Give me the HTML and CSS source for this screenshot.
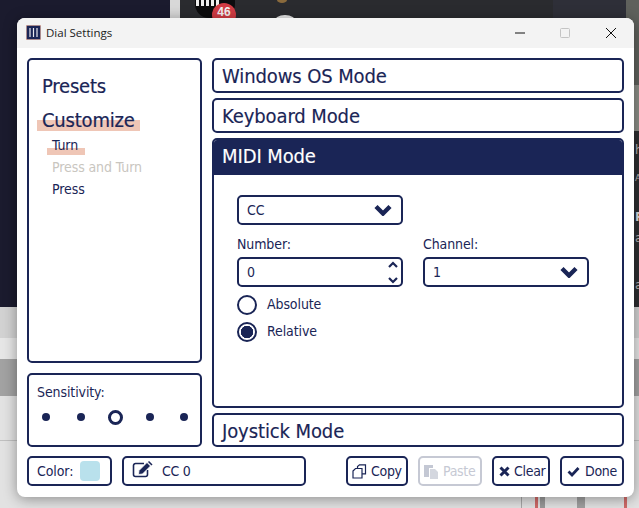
FILE: index.html
```html
<!DOCTYPE html>
<html lang="en">
<head>
<meta charset="utf-8">
<title>Dial Settings</title>
<link rel="stylesheet" href="styles.css">
</head>
<body>
<div class="desktop">
  <div class="bg bg-dark"></div>
  <div class="bg bg-dark2"></div>
  <div class="bg bg-dark3"></div>
  <div class="bg bg-sep"></div>
  <div class="bg bg-noise"></div>
  <div class="bg bg-noise2"></div>
  <div class="bg bg-side">
    <span class="t1">h</span><span class="t2">A</span><span class="t3">Ro</span><span class="t4">a</span><span class="t5">a</span>
  </div>
  <div class="bg bg-b1"></div>
  <div class="bg bg-b2"></div>
  <div class="bg bg-b3"></div>
  <div class="bg bg-b4"></div>
  <div class="bg bg-s1"></div><div class="bg bg-s2"></div><div class="bg bg-s3"></div><div class="bg bg-s4"></div><div class="bg bg-s5"></div>
  <div class="avatar"><i></i><i></i><i></i><i></i><i></i></div>
  <div class="badge">46</div>
  <div class="blob"></div>
  <div class="brown"></div>

  <section class="window">
    <header class="titlebar">
      <svg class="appicon" viewBox="0 0 15 15"><rect x="0" y="0" width="15" height="15" fill="#e9b9a8"/><rect x="0.7" y="0.7" width="13.600" height="13.600" fill="#1a2556"/><path d="M4 3v9M7.500 3v9M11 3v9" stroke="#e8e8ee" stroke-width="1.200"/></svg>
      <span class="title">Dial Settings</span>
      <div class="controls">
        <svg class="ctl ctl-min" viewBox="0 0 10 10"><path d="M0 5h10" stroke="#111" stroke-width="1"/></svg>
        <svg class="ctl ctl-max" viewBox="0 0 10 10"><rect x=".5" y=".5" width="9" height="9" rx="1" fill="none" stroke="#c4c4c4"/></svg>
        <svg class="ctl ctl-close" viewBox="0 0 10 10"><path d="M0 0l10 10M10 0L0 10" stroke="#111" stroke-width="1"/></svg>
      </div>
    </header>

    <div class="content">
      <div class="main">
        <aside class="leftcol">
          <nav class="panel nav">
            <a class="nav-h">Presets</a>
            <a class="nav-h nav-active"><span class="mark">Customize</span></a>
            <a class="nav-s nav-s-active"><span class="mark mark-s">Turn</span></a>
            <a class="nav-s nav-off">Press and Turn</a>
            <a class="nav-s">Press</a>
          </nav>
          <div class="panel sens">
            <div class="sens-label">Sensitivity:</div>
            <div class="dots"><i class="dot"></i><i class="dot"></i><i class="ring"></i><i class="dot"></i><i class="dot"></i></div>
          </div>
        </aside>

        <div class="modes">
          <div class="panel mode">Windows OS Mode</div>
          <div class="panel mode">Keyboard Mode</div>
          <div class="panel midi">
            <div class="midi-head">MIDI Mode</div>
            <div class="midi-body">
              <div class="field select wide"><span>CC</span><svg class="chev" viewBox="0 0 18 12"><path d="M2 2.500l7 7 7-7" fill="none" stroke="#1a2556" stroke-width="4.400"/></svg></div>
              <div class="cols">
                <div class="col">
                  <label class="lab">Number:</label>
                  <div class="field spinfield"><span>0</span>
                    <svg class="spin" viewBox="0 0 12 26"><path d="M2 8l4-4 4 4M2 19l4 4 4-4" fill="none" stroke="#1a2556" stroke-width="2.200"/></svg>
                  </div>
                </div>
                <div class="col">
                  <label class="lab">Channel:</label>
                  <div class="field select"><span>1</span><svg class="chev" viewBox="0 0 18 12"><path d="M2 2.500l7 7 7-7" fill="none" stroke="#1a2556" stroke-width="4.400"/></svg></div>
                </div>
              </div>
              <div class="radios">
                <div class="radio"><i class="rb"></i><span>Absolute</span></div>
                <div class="radio"><i class="rb rb-on"></i><span>Relative</span></div>
              </div>
            </div>
          </div>
          <div class="panel mode">Joystick Mode</div>
        </div>
      </div>

      <footer class="bar">
        <div class="panel color">Color:<i class="swatch"></i></div>
        <div class="panel name">
          <svg class="pen" viewBox="0 0 21 17"><path d="M12 2.500H3.500A2 2 0 0 0 1.500 4.500v9a2 2 0 0 0 2 2h10a2 2 0 0 0 2-2V9" fill="none" stroke="#1a2556" stroke-width="1.600"/><path d="M7 9.500L15 1.500l3.500 3.500-8 8L6.500 13.500z" fill="#1a2556" stroke="#fff" stroke-width=".8"/><path d="M16.500 .5l3.500 3.500" stroke="#1a2556" stroke-width="1.500"/></svg>
          <span>CC 0</span>
        </div>
        <div class="btns">
          <button class="btn btn-copy"><svg class="ic" viewBox="0 0 15 15"><path d="M5.500 4V2.500L7.500 .8h6v9H10M1 7l2.500-2.500H10v9.500H1z" fill="none" stroke="#1a2556" stroke-width="1.200"/></svg>Copy</button>
          <button class="btn btn-off"><svg class="ic" viewBox="0 0 15 15"><path d="M0 1h9v3H5v9H0z" fill="#c4c8d4"/><path d="M6 5h5l3 3v7H6z" fill="#d4d7df"/></svg>Paste</button>
          <button class="btn btn-clear"><svg class="ic ic-s" viewBox="0 0 11 11"><path d="M1.500 1.500l8 8M9.500 1.500l-8 8" stroke="#1a2556" stroke-width="3"/></svg>Clear</button>
          <button class="btn btn-done"><svg class="ic ic-c" viewBox="0 0 13 11"><path d="M1.500 5.500l3.500 3.500 6.500-7" fill="none" stroke="#1a2556" stroke-width="2.800"/></svg>Done</button>
        </div>
      </footer>
    </div>
  </section>
</div>
</body>
</html>
```

FILE: styles.css
```css
* { box-sizing: border-box; }
html, body { margin: 0; padding: 0; }
body { width: 639px; height: 508px; overflow: hidden; background: #e2e2e2; }

.desktop { position: relative; width: 639px; height: 508px; overflow: hidden; background: #e2e2e2; font-family: "DejaVu Sans", sans-serif; font-stretch: condensed; color: #1a2556; letter-spacing: -.1px; }
.bg { position: absolute; }
.bg-dark { left: 0; top: 0; width: 172px; height: 307px; background: #1b1b2e; }
.bg-dark2 { left: 180px; top: 0; width: 373px; height: 40px; background: #2a2b2f; }
.bg-dark3 { left: 553px; top: 0; width: 73px; height: 40px; background: #2e2f38; }
.bg-sep { left: 170px; top: 0; width: 10px; height: 40px; background: #d8d8d8; }
.bg-noise { left: 626px; top: 0; width: 13px; height: 85px; background: #5f615c; }
.bg-noise2 { left: 626px; top: 85px; width: 13px; height: 46px; background: #8b8d86; }
.bg-side { left: 626px; top: 131px; width: 13px; height: 177px; background: #2d2e30; color: #b8b8b8; font-size: 12px; line-height: 14px; font-stretch: normal; overflow: hidden; }
.bg-side span { position: absolute; left: 9px; }
.t1 { top: 12px; }
.t2 { top: 40px; font-size: 9px; }
.t3 { top: 79px; font-weight: 700; color: #ddd; }
.t4 { top: 100px; }
.t5 { top: 147px; }
.bg-b1 { left: 0; top: 307px; width: 639px; height: 31px; background: #d2d2d2; }
.bg-b2 { left: 0; top: 338px; width: 639px; height: 21px; background: #e6e6e6; }
.bg-b3 { left: 0; top: 359px; width: 639px; height: 37px; background: #a2a2a2; }
.bg-b4 { left: 0; top: 440px; width: 639px; height: 1px; background: #c0c0c0; }
.bg-s1 { left: 521px; top: 497px; width: 1px; height: 11px; background: #a8a8a8; }
.bg-s2 { left: 535px; top: 497px; width: 3px; height: 11px; background: #cf6a68; }
.bg-s3 { left: 540px; top: 497px; width: 5px; height: 11px; background: #9a9a9a; }
.bg-s4 { left: 577px; top: 497px; width: 8px; height: 11px; background: #a0a0a0; }
.bg-s5 { left: 624px; top: 497px; width: 3px; height: 11px; background: #cf6a68; }

.avatar { position: absolute; left: 195px; top: -8px; width: 40px; height: 26px; background: #0c0c0e; border-radius: 0 0 14px 14px; display: flex; gap: 2px; padding: 8px 0 0 1px; }
.avatar i { display: block; width: 3px; height: 6px; background: #eee; }
.badge { position: absolute; left: 212px; top: 3px; width: 24px; height: 24px; padding-top: 2px; background: #d23c44; border-radius: 50%; color: #f4f4f4; font: 700 12px/14px "Liberation Sans", sans-serif; letter-spacing: 0; text-align: center; }
.blob { position: absolute; left: 274px; top: 15px; width: 22px; height: 14px; border-radius: 50%; background: #e8e8e8; }
.brown { position: absolute; left: 277px; top: -3px; width: 10px; height: 6px; border-radius: 50%; background: #8a6a3c; }

.window { position: absolute; left: 17px; top: 18px; width: 617px; height: 479px; background: #fff; border-radius: 8px; box-shadow: 0 2px 14px rgba(0, 0, 0, .38); overflow: hidden; display: flex; flex-direction: column; }
.titlebar { height: 30px; flex: none; background: #f3f3f3; display: flex; align-items: center; padding-left: 9px; }
.appicon { width: 15px; height: 15px; flex: none; margin-top: -1px; }
.title { margin-left: 5px; font: 400 11.500px/16px "Open Sans", sans-serif; letter-spacing: 0; color: #222; }
.controls { margin-left: auto; display: flex; align-items: center; padding-right: 18px; }
.ctl { display: block; width: 10px; height: 10px; }
.ctl-max { margin: 0 36px 0 35px; }

.content { flex: 1; display: flex; flex-direction: column; padding: 10px 10px 11px; gap: 9px; }
.main { height: 389px; display: flex; gap: 10px; }
.panel { border: 2px solid #1a2556; border-radius: 5px; background: #fff; }

.leftcol { width: 175px; flex: none; display: flex; flex-direction: column; gap: 10px; }
.nav { height: 305px; padding: 14px 0 0 13px; display: flex; flex-direction: column; }
.nav-h { font-size: 20px; line-height: 24px; height: 34px; letter-spacing: -.2px; -webkit-text-stroke: .2px #1a2556; }
.mark { display: inline-block; padding: 0 5px; margin-left: -5px; background: linear-gradient(#efc6b6, #efc6b6) 0 100% / 100% 11px no-repeat; line-height: 24px; height: 23px; }
.nav-s { font-size: 14px; line-height: 18px; height: 22px; margin-left: 10px; }
.nav-s-active { margin-top: -6px; }
.mark-s { line-height: 18px; height: 19px; padding-right: 7px; background-size: 100% 7px; background-position: 0 100%; }
.nav-off { color: #c9c6bf; }

.sens { flex: 1; padding: 7px 8px 0; }
.sens-label { font-size: 14px; line-height: 20px; }
.dots { display: flex; justify-content: space-between; align-items: center; height: 20px; margin-top: 5px; padding: 0 4px 0 5px; }
.dot { display: block; width: 8px; height: 8px; border-radius: 50%; background: #1a2556; }
.ring { display: block; width: 15px; height: 15px; margin: 0 -3.500px; border: 3px solid #1a2556; border-radius: 50%; }

.modes { flex: 1; display: flex; flex-direction: column; gap: 5px; }
.mode { height: 35px; padding-left: 8px; font-size: 20px; line-height: 33px; -webkit-text-stroke: .15px #1a2556; }
.modes .mode:last-child { height: 34px; }
.midi { height: 270px; display: flex; flex-direction: column; overflow: hidden; }
.midi-head { height: 35px; margin: 0; background: #1a2556; color: #fff; font-size: 20px; line-height: 33px; padding-left: 8px; flex: none; -webkit-text-stroke: .15px #fff; }
.midi-body { padding: 20px 0 0 23px; }

.field { width: 166px; height: 30px; border: 2px solid #1a2556; border-radius: 5px; display: flex; align-items: center; justify-content: space-between; padding: 0 3px 0 8px; font-size: 14px; }
.select { padding-right: 9px; }
.spinfield { padding-right: 2px; }
.chev { width: 18px; height: 12px; display: block; }
.spin { width: 12px; height: 26px; display: block; }
.cols { display: flex; gap: 20px; margin-top: 9px; }
.lab { display: block; font-size: 14px; line-height: 20px; height: 23px; }
.radios { display: flex; flex-direction: column; gap: 6px; margin-top: 7px; }
.radio { display: flex; align-items: center; gap: 10px; height: 21px; font-size: 14px; }
.radio span { margin-top: -2px; }
.rb { display: block; width: 20px; height: 20px; border: 2px solid #1a2556; border-radius: 50%; background: #fff; }
.rb-on { background: radial-gradient(circle, #1a2556 0 6px, #fff 6.500px); }

.bar { height: 30px; display: flex; }
.color { width: 85px; display: flex; align-items: center; padding-left: 8px; font-size: 14px; gap: 7px; }
.swatch { display: block; width: 20px; height: 20px; border-radius: 4px; background: #b9e1ec; }
.name { width: 184px; margin-left: 10px; display: flex; align-items: center; padding-left: 8px; font-size: 14px; letter-spacing: -.3px; }
.pen { width: 21px; height: 17px; display: block; margin-top: -3px; }
.name span { margin-left: 9px; }
.btns { margin-left: 40px; display: flex; gap: 10px; }
.btn { height: 30px; border: 2px solid #1a2556; border-radius: 5px; background: #fff; color: #1a2556; font: inherit; font-size: 14px; font-stretch: condensed; letter-spacing: -.3px; display: flex; align-items: center; padding: 0 0 0 4px; gap: 4px; }
.btn-copy { width: 62px; }
.btn-off { width: 64px; border-color: #c6c9d4; color: #c6c9d4; }
.btn-clear { width: 58px; gap: 4px; padding-left: 5px; }
.btn-done { width: 64px; gap: 5px; padding-left: 5px; }
.ic { width: 15px; height: 15px; display: block; flex: none; }
.ic-s { width: 11px; height: 11px; }
.ic-c { width: 13px; height: 11px; }
```
